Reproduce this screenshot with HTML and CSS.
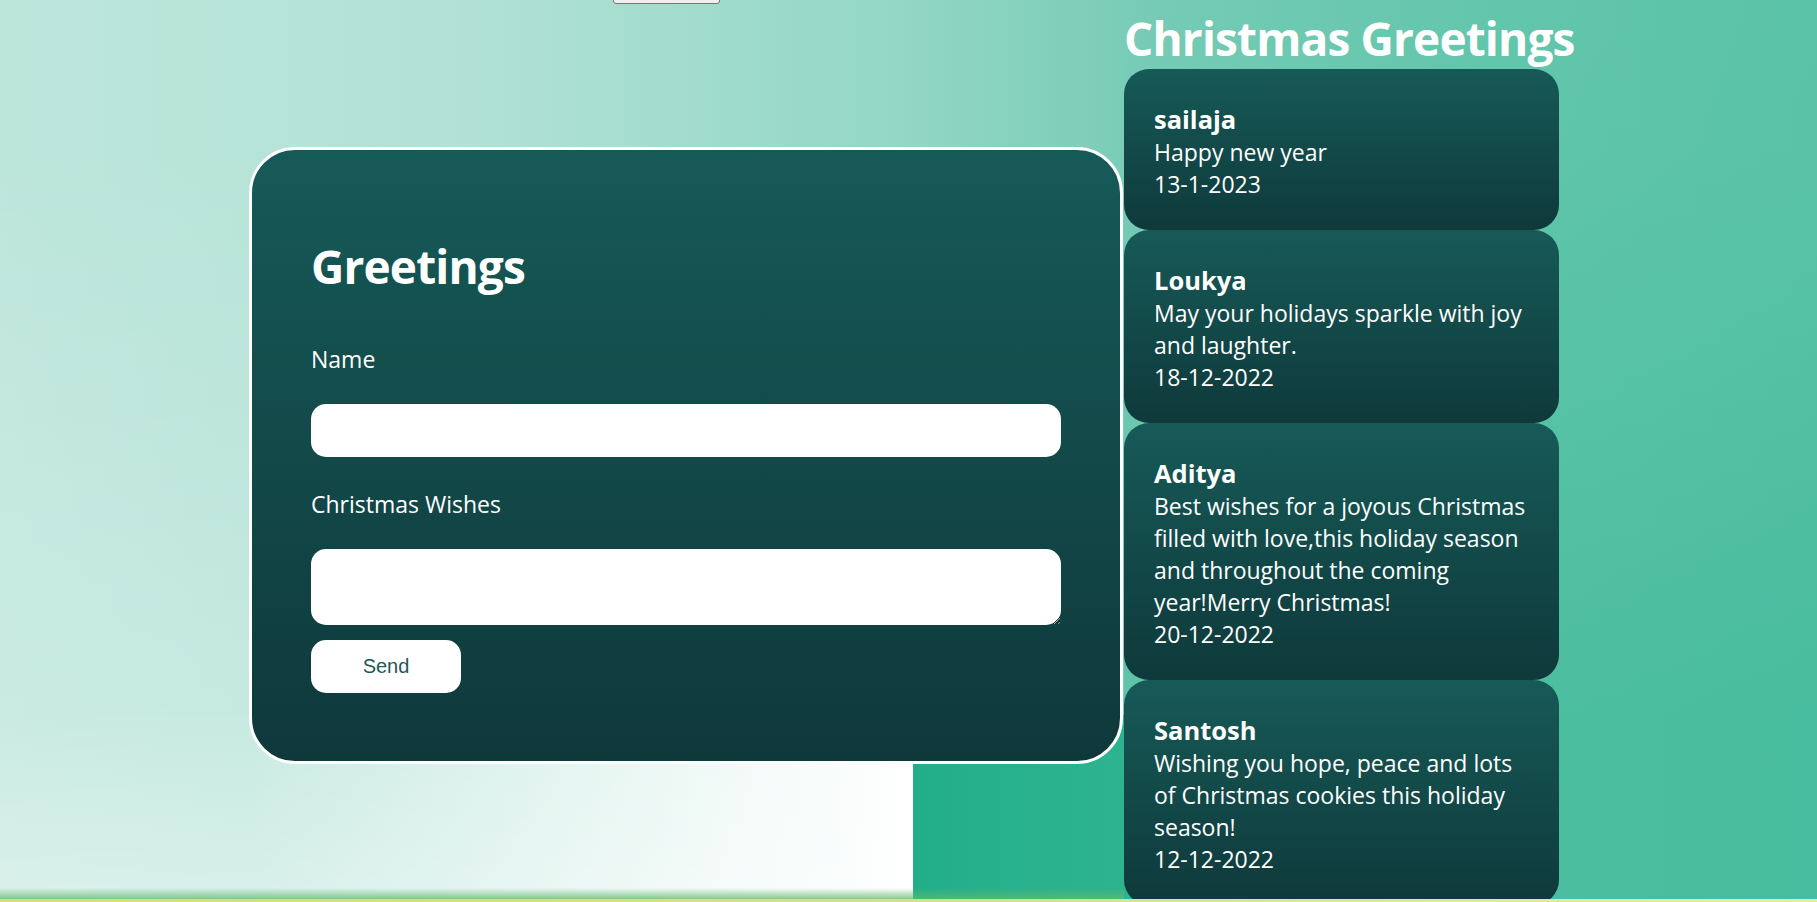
FILE: index.html
```html
<!DOCTYPE html>
<html lang="en">
<head>
<meta charset="utf-8">
<title>Christmas Greetings</title>
<link rel="stylesheet" href="styles.css">
</head>
<body>
<div class="page">
  <div class="topbar"><button class="logout" type="button" aria-label="Logout"></button></div>
  <main class="layout">
    <form class="form-card">
      <h1 class="form-title">Greetings</h1>
      <label class="field-label" for="name">Name</label>
      <input class="text-input" id="name" type="text">
      <label class="field-label wishes-label" for="wishes">Christmas Wishes</label>
      <textarea class="text-area" id="wishes"></textarea>
      <button class="send-btn" type="button">Send</button>
    </form>
    <section class="wishes">
      <h1 class="wishes-title">Christmas Greetings</h1>
      <ul class="wish-list">
        <li class="wish-card">
          <h3 class="wish-name">sailaja</h3>
          <p class="wish-text">Happy new year</p>
          <p class="wish-text">13-1-2023</p>
        </li>
        <li class="wish-card">
          <h3 class="wish-name">Loukya</h3>
          <p class="wish-text">May your holidays sparkle with joy and laughter.</p>
          <p class="wish-text">18-12-2022</p>
        </li>
        <li class="wish-card">
          <h3 class="wish-name">Aditya</h3>
          <p class="wish-text">Best wishes for a joyous Christmas filled with love,this holiday season and throughout the coming year!Merry Christmas!</p>
          <p class="wish-text">20-12-2022</p>
        </li>
        <li class="wish-card">
          <h3 class="wish-name">Santosh</h3>
          <p class="wish-text">Wishing you hope, peace and lots of Christmas cookies this holiday season!</p>
          <p class="wish-text">12-12-2022</p>
        </li>
      </ul>
    </section>
  </main>
  <div class="footer-line"></div>
</div>
</body>
</html>
```

FILE: styles.css
```css
* {
  box-sizing: border-box;
}

body {
  margin: 0;
  font-family: "Open Sans", "Noto Sans", sans-serif;
}

.page {
  height: 902px;
  overflow: hidden;
  display: flex;
  flex-direction: column;
  background:
    linear-gradient(to bottom, rgba(96, 184, 110, 0), rgba(96, 184, 110, 0.75)) left 0 bottom 3px / 1124px 11px no-repeat,
    linear-gradient(to bottom, rgba(255, 255, 255, 0) 0px, rgba(255, 255, 255, 0) 147px, rgba(255, 255, 255, 0.2) 715px) left top / 1000px 715px no-repeat,
    linear-gradient(to bottom, rgba(34, 174, 138, 0) 0px, rgba(34, 174, 138, 0.02) 147px, rgba(34, 174, 138, 0.33) 715px) left 1124px top 0 / 693px 715px no-repeat,
    linear-gradient(to right, #bde6db 0px, #b2e2d5 450px, #93d7c5 900px, #76cbb5 1160px, #62c6ab 1500px, #5bc3a8 1817px) left top / 100% 715px no-repeat,
    linear-gradient(to bottom, rgba(255, 255, 255, 0) 0px, rgba(255, 255, 255, 0.3) 185px) left 0 top 715px / 913px 187px no-repeat,
    linear-gradient(to right, #caebe2 0px, #c7eae1 249px, #d8f0ea 450px, #eef9f6 700px, #ffffff 913px, #22ae8a 913px, #2eb390 1124px, #42bb9c 1450px, #4cbea0 1560px, #48bc9e 1817px);
}

.topbar {
  flex: none;
  height: 4px;
  display: flex;
  align-items: flex-end;
  padding-left: 613px;
}

.logout {
  flex: none;
  width: 107px;
  height: 30px;
  border: 1px solid #767676;
  border-radius: 3px;
  background: #efefef;
}

.layout {
  flex: 1;
  min-height: 0;
  display: flex;
  align-items: flex-start;
  gap: 1px;
  padding-left: 249px;
}

.form-card {
  flex: none;
  width: 874px;
  margin: 143px 0 0;
  padding: 84px 59px 68px;
  border: 3px solid #ffffff;
  border-radius: 46px;
  background: linear-gradient(to bottom, #165a57, #0f383b);
  display: flex;
  flex-direction: column;
  align-items: flex-start;
}

.form-title {
  margin: 0;
  font-size: 46px;
  line-height: 64px;
  font-weight: 700;
  letter-spacing: -0.85px;
  color: #ffffff;
}

.field-label {
  margin-top: 45px;
  font-size: 23px;
  line-height: 32px;
  color: #ffffff;
}

.wishes-label {
  margin-top: 31px;
}

.text-input {
  display: block;
  margin-top: 29px;
  width: 100%;
  height: 53px;
  border: none;
  border-radius: 15px;
  background: #ffffff;
}

.text-area {
  display: block;
  margin-top: 29px;
  width: 100%;
  height: 76px;
  border: none;
  border-radius: 15px;
  background: #ffffff;
}

.send-btn {
  margin-top: 15px;
  width: 150px;
  height: 53px;
  border: none;
  border-radius: 15px;
  background: #ffffff;
  color: #1d5a57;
  font: 20px "Liberation Sans", Arial, sans-serif;
}

.wishes {
  flex: none;
  width: 435px;
}

.wishes-title {
  margin: 3px 0 0;
  font-size: 46px;
  line-height: 62px;
  font-weight: 700;
  letter-spacing: -0.85px;
  white-space: nowrap;
  color: #ffffff;
}

.wish-list {
  list-style: none;
  margin: 0;
  padding: 0;
}

.wish-card {
  padding: 34px 30px 30px;
  border-radius: 25px;
  background: linear-gradient(to bottom, #165a57, #0f393b);
  color: #ffffff;
}

.wish-name {
  margin: 0;
  font-size: 25.5px;
  line-height: 33px;
  font-weight: 700;
}

.wish-text {
  margin: 0;
  font-size: 23px;
  line-height: 32px;
}

.footer-line {
  flex: none;
  height: 3px;
  background: linear-gradient(to right, #dcdc76, #cfe28c 50%, #e3efa0);
}
```
